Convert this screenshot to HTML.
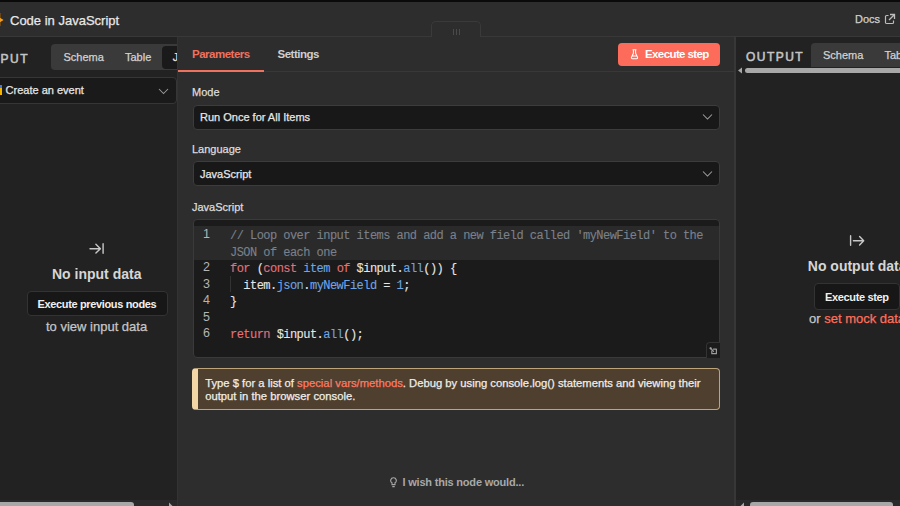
<!DOCTYPE html>
<html><head><meta charset="utf-8">
<style>
*{box-sizing:border-box;margin:0;padding:0}
html,body{width:900px;height:506px;overflow:hidden;background:#0a0a0a;font-family:"Liberation Sans",sans-serif;position:relative}
.abs{position:absolute}
.t{position:absolute;white-space:nowrap;line-height:1;-webkit-text-stroke:0.25px currentColor}
.t[style*="bold"]{-webkit-text-stroke:0}
#hdr{left:0;top:2px;width:900px;height:35px;background:#2d2d2d;border-bottom:1px solid #383838}
#left{left:0;top:37px;width:178px;height:469px;background:#222;border-right:1px solid #333}
#center{left:178px;top:37px;width:556px;height:469px;background:#2d2d2d}
#right{left:734px;top:37px;width:166px;height:469px;background:#222;border-left:2px solid #373737}
.box{position:absolute;background:#181818;border:1px solid #3c3c3c;border-radius:4px}
.lbl{color:#dcdcdc;font-size:11px}
.code{font-family:"Liberation Mono",monospace;font-size:12px;letter-spacing:-0.54px;-webkit-text-stroke:0.1px currentColor;white-space:pre;position:absolute;line-height:1}
.ln{position:absolute;left:200px;width:10px;text-align:right;font-family:"Liberation Sans",sans-serif;font-size:12.5px;line-height:1;color:#b4b4b4}
.kw{color:#e5717b}.bl{color:#6ea6e6}.df{color:#e6e6e6}.cm{color:#7b818b}
</style></head><body>
<div id="hdr" class="abs"></div>
<!-- header content -->
<div class="abs" style="left:0;top:13px;width:1px;height:13px;background:#6a4516"></div>
<svg class="abs" style="left:0;top:17px" width="5" height="6" viewBox="0 0 5 6"><path d="M0 0.8L3.6 3L0 5.2z" fill="#f59e1b"/></svg>
<div class="t" style="left:10px;top:13.5px;font-size:13px;color:#e8e8e8">Code in JavaScript</div>
<div class="t" style="left:855px;top:14px;font-size:11px;color:#d0d0d0">Docs</div>
<svg class="abs" style="left:882.8px;top:12.5px" width="13" height="13" viewBox="0 0 13 13"><path d="M5.5 2.5H3.6a1.1 1.1 0 0 0-1.1 1.1v5.8a1.1 1.1 0 0 0 1.1 1.1h5.8a1.1 1.1 0 0 0 1.1-1.1V7.5" fill="none" stroke="#bdbdbd" stroke-width="1.2"/><path d="M7 1.5h4.5V6M11.3 1.7L6 7" fill="none" stroke="#bdbdbd" stroke-width="1.3"/></svg>
<!-- drag handle -->
<div class="abs" style="left:431px;top:21px;width:50px;height:17px;background:#2d2d2d;border:1px solid #3a3a3a;border-bottom:none;border-radius:5px 5px 0 0"></div>
<div class="abs" style="left:453px;top:29px;width:1px;height:6px;background:#4a4a4a"></div>
<div class="abs" style="left:456px;top:29px;width:1px;height:6px;background:#4a4a4a"></div>
<div class="abs" style="left:459px;top:29px;width:1px;height:6px;background:#4a4a4a"></div>

<div id="left" class="abs"></div>
<div id="center" class="abs"></div>
<div id="right" class="abs"></div>

<!-- LEFT panel content -->
<div class="abs" style="left:0;top:0;width:177px;height:506px;overflow:hidden">
<div class="t" style="left:0.5px;top:52.5px;font-size:12px;letter-spacing:1.6px;-webkit-text-stroke:0.55px currentColor;color:#c4c4c4">PUT</div>
<div class="abs" style="left:51px;top:44px;width:140px;height:26px;background:#3a3a3a;border-radius:4px"></div>
<div class="t" style="left:63.5px;top:52px;font-size:11px;color:#d2d2d2">Schema</div>
<div class="t" style="left:125px;top:52px;font-size:11px;color:#d2d2d2">Table</div>
<div class="abs" style="left:162px;top:46px;width:30px;height:22.5px;background:#1a1a1a;border-radius:4px"></div>
<div class="t" style="left:172.8px;top:52px;font-size:11px;color:#e8e8e8">JSON</div>
<div class="box" style="left:-10px;top:77px;width:187px;height:27px;background:#1a1a1a;border-color:#363636"></div>
<div class="abs" style="left:0;top:85px;width:1.5px;height:10px;background:linear-gradient(#3d7be0 0,#3d7be0 30%,#f4b400 30%)"></div>
<div class="t" style="left:5.6px;top:85px;font-size:11px;color:#e6e6e6">Create an event</div>
<svg class="abs" style="left:158px;top:87.5px" width="11" height="7" viewBox="0 0 11 7"><path d="M1 1l4.5 4.5L10 1" fill="none" stroke="#9a9a9a" stroke-width="1.05"/></svg>
<svg class="abs" style="left:88px;top:242px" width="18" height="13" viewBox="0 0 18 13"><path d="M2 6.7H12.2M7.9 2.3L12.4 6.7L7.9 11.1M15.1 1.7V11.3" fill="none" stroke="#c8c8c8" stroke-width="1.4" stroke-linecap="round" stroke-linejoin="round"/></svg>
<div class="t" style="left:52px;top:267px;font-size:14px;font-weight:bold;color:#d6d6d6">No input data</div>
<div class="box" style="left:27px;top:291px;width:141px;height:25px;background:#171717;border-color:#333"></div>
<div class="t" style="left:37.5px;top:298.5px;font-size:11px;font-weight:bold;letter-spacing:-0.35px;color:#f0f0f0">Execute previous nodes</div>
<div class="t" style="left:46px;top:320px;font-size:13px;color:#c6c6c6">to view input data</div>
<div class="abs" style="left:0;top:500px;width:177px;height:6px;background:#2a2a2a"></div>
<div class="abs" style="left:-5px;top:502px;width:139px;height:6px;background:#a8a8a8;border-radius:3px"></div>
<svg class="abs" style="left:168px;top:502px" width="6" height="6" viewBox="0 0 6 6"><path d="M1 0.5L5 4.5V6H1z" fill="#a8a8a8"/></svg>

</div>
<!-- CENTER panel content -->
<div class="t" style="left:192px;top:49px;font-size:11.5px;font-weight:bold;letter-spacing:-0.5px;color:#f0715e">Parameters</div>
<div class="abs" style="left:178px;top:71px;width:557px;height:1px;background:#383838"></div>
<div class="abs" style="left:178px;top:70px;width:86px;height:2px;background:#f0715e"></div>
<div class="t" style="left:277.5px;top:49px;font-size:11.5px;font-weight:bold;letter-spacing:-0.5px;color:#cfcfcf">Settings</div>
<div class="abs" style="left:618px;top:43px;width:102px;height:23px;background:#fd6c5a;border-radius:4px"></div>
<svg class="abs" style="left:630px;top:49px" width="9" height="11" viewBox="0 0 9 11"><path d="M2.9 0.8h3.2M3.4 0.8v3.4L1.5 8.2a1 1 0 0 0 .9 1.5h4.2a1 1 0 0 0 .9-1.5L5.6 4.2V0.8M2.1 6.9h4.8" fill="none" stroke="#fff" stroke-width="1.05" stroke-linejoin="round" stroke-linecap="round"/></svg>
<div class="t" style="left:645px;top:49px;font-size:11.5px;font-weight:bold;letter-spacing:-0.6px;color:#fff">Execute step</div>

<div class="t lbl" style="left:192px;top:87px">Mode</div>
<div class="box" style="left:193px;top:104.5px;width:527px;height:25px"></div>
<div class="t" style="left:200px;top:112px;font-size:11px;color:#e6e6e6">Run Once for All Items</div>
<svg class="abs" style="left:702px;top:113px" width="11" height="8" viewBox="0 0 11 8"><path d="M1 1.5l4.5 4.5L10 1.5" fill="none" stroke="#a0a0a0" stroke-width="1.05"/></svg>

<div class="t lbl" style="left:192px;top:144px">Language</div>
<div class="box" style="left:193px;top:161px;width:527px;height:25px"></div>
<div class="t" style="left:200px;top:169px;font-size:11px;color:#e6e6e6">JavaScript</div>
<svg class="abs" style="left:702px;top:170px" width="11" height="8" viewBox="0 0 11 8"><path d="M1 1.5l4.5 4.5L10 1.5" fill="none" stroke="#a0a0a0" stroke-width="1.05"/></svg>

<div class="t lbl" style="left:192px;top:202px">JavaScript</div>
<div class="box" style="left:193px;top:219px;width:527px;height:139px;background:#1b1b1b;border-color:#3a3a3a;overflow:hidden">
  <div class="abs" style="left:0;top:6px;width:525px;height:34px;background:#2a2a2a"></div>
</div>
<div class="ln" style="top:228.3px">1</div>
<div class="code cm" style="left:230px;top:230.0px">// Loop over input items and add a new field called 'myNewField' to the</div>
<div class="code cm" style="left:230px;top:246.5px">JSON of each one</div>
<div class="ln" style="top:261.3px">2</div>
<div class="code df" style="left:230px;top:263.0px"><span class="kw">for</span> (<span class="kw">const</span> <span class="bl">item</span> <span class="kw">of</span> $input.<span class="bl">all</span>()) {</div>
<div class="ln" style="top:277.8px">3</div>
<div class="abs" style="left:230px;top:276px;width:1px;height:16px;background:#333"></div>
<div class="code df" style="left:230px;top:279.5px">  item.<span class="bl">json</span>.<span class="bl">myNewField</span> = <span class="bl">1</span>;</div>
<div class="ln" style="top:294.3px">4</div>
<div class="code df" style="left:230px;top:296.0px">}</div>
<div class="ln" style="top:310.8px">5</div>
<div class="ln" style="top:327.3px">6</div>
<div class="code df" style="left:230px;top:329.0px"><span class="kw">return</span> $input.<span class="bl">all</span>();</div>
<div class="abs" style="left:706px;top:342px;width:14px;height:16px;background:#1b1b1b;border:1px solid #333;border-right:none;border-bottom:none;border-radius:4px 0 0 0"></div>
<svg class="abs" style="left:706px;top:342px" width="14" height="15" viewBox="0 0 14 15"><circle cx="4.6" cy="6.3" r="1.1" fill="#b0b0b0"/><path d="M4.6 6.3L7.6 9.3M5.8 8.9V11.7H10.4V7.1H7.4" fill="none" stroke="#9c9c9c" stroke-width="1.2" stroke-linejoin="round" stroke-linecap="round"/></svg>

<div class="abs" style="left:192px;top:368px;width:528px;height:42px;background:#4e3f2e;border:1px solid #bea47a;border-left:6px solid #f2d6a5;border-radius:4px"></div>
<div class="t" style="left:205.2px;top:376.7px;font-size:11.25px;color:#efeeea;line-height:13px">Type $ for a list of <span style="color:#ff7a64">special vars/methods</span>. Debug by using console.log() statements and viewing their<br>output in the browser console.</div>

<svg class="abs" style="left:390px;top:477px" width="7" height="11" viewBox="0 0 7 11"><path d="M3.5 0.8A2.7 2.7 0 0 0 2 5.8v1.8h3V5.8A2.7 2.7 0 0 0 3.5 0.8zM2.3 9.6h2.4" fill="none" stroke="#a8a8a8" stroke-width="1.1"/></svg>
<div class="t" style="left:402.5px;top:477px;font-size:11px;font-weight:bold;letter-spacing:-0.2px;color:#a8a8a8">I wish this node would...</div>

<!-- RIGHT panel content -->
<div class="t" style="left:746px;top:50.5px;font-size:12px;letter-spacing:1.45px;-webkit-text-stroke:0.55px currentColor;color:#c4c4c4">OUTPUT</div>
<div class="abs" style="left:811px;top:43px;width:100px;height:24px;background:#3a3a3a;border-radius:4px 0 0 0"></div>
<div class="t" style="left:823px;top:50px;font-size:11px;color:#d2d2d2">Schema</div>
<div class="t" style="left:884.5px;top:50px;font-size:11px;color:#d2d2d2">Table</div>
<div class="abs" style="left:736px;top:67px;width:164px;height:7px;background:#222"></div>
<svg class="abs" style="left:737px;top:67px" width="6" height="7" viewBox="0 0 6 7"><path d="M5 0.5v6L1 3.5z" fill="#a8a8a8"/></svg>
<div class="abs" style="left:745px;top:68px;width:170px;height:5px;background:#a8a8a8;border-radius:3px"></div>
<svg class="abs" style="left:848px;top:233.5px" width="18" height="13" viewBox="0 0 18 13"><path d="M2.6 1.7V11.3M5.4 6.7H15.6M11.6 2.4L15.7 6.7L11.6 11" fill="none" stroke="#c8c8c8" stroke-width="1.4" stroke-linecap="round" stroke-linejoin="round"/></svg>
<div class="t" style="left:807.8px;top:259px;font-size:14px;font-weight:bold;color:#d6d6d6">No output data</div>
<div class="box" style="left:814px;top:283px;width:86px;height:27px;background:#171717;border-color:#333"></div>
<div class="t" style="left:825px;top:291.5px;font-size:11px;font-weight:bold;letter-spacing:-0.35px;color:#f0f0f0">Execute step</div>
<div class="t" style="left:809px;top:312px;font-size:13px;color:#c6c6c6">or <span style="color:#ff6f5c">set mock data</span></div>
<div class="abs" style="left:736px;top:500px;width:164px;height:6px;background:#2a2a2a"></div>
<svg class="abs" style="left:739px;top:502px" width="6" height="6" viewBox="0 0 6 6"><path d="M5 0.5L1 4.5V6H5z" fill="#a8a8a8"/></svg>
<div class="abs" style="left:750px;top:502px;width:143px;height:6px;background:#a8a8a8;border-radius:3px"></div>
</body></html>
